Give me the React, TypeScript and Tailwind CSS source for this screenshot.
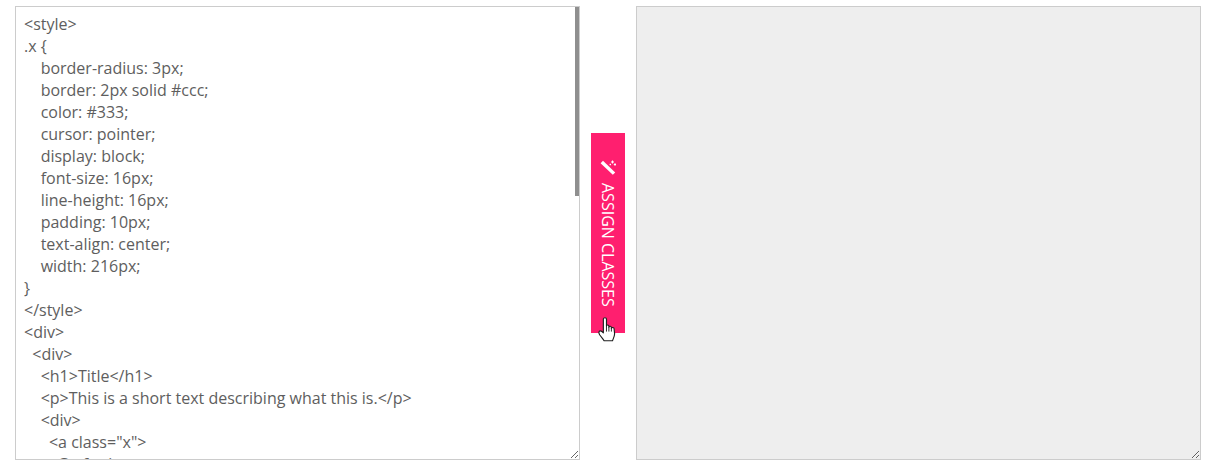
import React from "react";

const code = `<style>
.x {
    border-radius: 3px;
    border: 2px solid #ccc;
    color: #333;
    cursor: pointer;
    display: block;
    font-size: 16px;
    line-height: 16px;
    padding: 10px;
    text-align: center;
    width: 216px;
}
</style>
<div>
  <div>
    <h1>Title</h1>
    <p>This is a short text describing what this is.</p>
    <div>
      <a class="x">
        Go for it
      </a>
    </div>
  </div>
</div>`;

function Wand() {
  return (
    <svg width="16" height="16" viewBox="0 0 16 16" className="shrink-0">
      <path d="M0.600 3.200 L3 0.800 L15.200 12.400 L12.800 14.800 Z" fill="#fff" />
      <path d="M12.500 0.500V3.500M11 2H14M15 3.300V5.700M13.800 4.500H16M10.300 3.800V5.200M9.600 4.500H11" stroke="#fff" strokeWidth="1.100" fill="none" />
    </svg>
  );
}

function Hand() {
  return (
    <svg width="18" height="25" viewBox="0 0 17 24" className="absolute left-[7px] top-[184px]">
      <path
        d="M5 2C5 .3 8 .3 8 2V8.600C8 7.400 10.300 7.400 10.300 8.800V9.700C10.500 8.600 12.700 8.600 12.700 10V10.800C13 9.800 15.300 9.800 15.300 11.300L15.800 16C15.800 18.300 14.700 20.300 13.800 22.800H5.700C4.800 20.800 3.200 19.500 1.600 17.300C.2 15.200.6 13.600 1.800 13.300C2.800 13.100 4 14 5 15.200Z"
        fill="#fff"
        stroke="#1f1f1f"
        strokeWidth="1.100"
        strokeLinejoin="round"
      />
      <path d="M8 8.500V14M10.300 9.500V14M12.700 10.500V14" stroke="#1f1f1f" strokeWidth="0.900" fill="none" />
    </svg>
  );
}

export default function App() {
  return (
    <div className="flex h-[471px] w-[1213px] items-start bg-white pl-[15px] pt-[6px] font-['Open_Sans',sans-serif]">
      <div className="relative h-[454px] w-[565px]">
        <textarea
          readOnly
          defaultValue={code}
          spellCheck={false}
          className="block h-[454px] w-[565px] resize overflow-hidden border border-[#cccccc] bg-white pb-0 pl-[8px] pr-[8px] pt-[6px] text-[16px] leading-[22px] text-[#5e5e5e] outline-none"
        />
        <div className="absolute right-px top-px h-[189px] w-[4px] bg-[#8f8f8f]" />
      </div>
      <div className="relative ml-[11px] mt-[127px] w-[34px]">
        <button className="flex h-[200px] w-[34px] items-center justify-center gap-[7px] bg-[#ff1f6f] pt-[1px] text-[16px] leading-none text-white [writing-mode:vertical-rl]">
          <Wand />
          <span>ASSIGN CLASSES</span>
        </button>
        <Hand />
      </div>
      <textarea
        readOnly
        className="ml-[11px] h-[454px] w-[565px] resize border border-[#cccccc] bg-[#eeeeee] outline-none"
      />
    </div>
  );
}
